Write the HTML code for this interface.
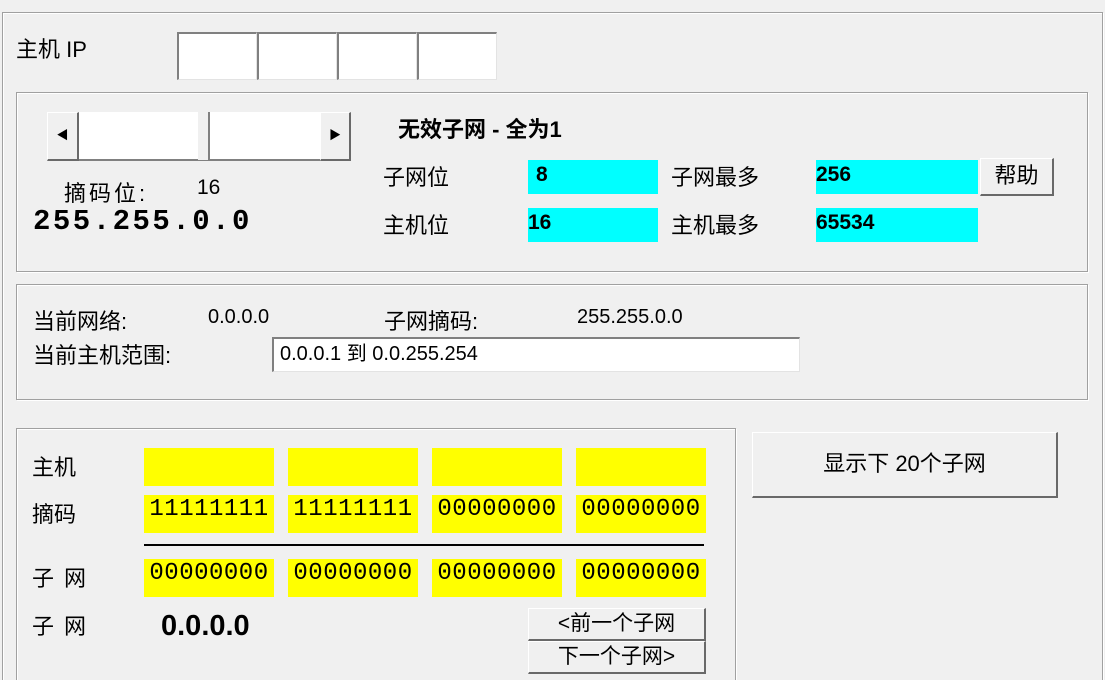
<!DOCTYPE html>
<html style="overflow:hidden;width:1105px;height:680px"><head><meta charset="utf-8"><style>
body{margin:0;width:1105px;height:680px;background:#f0f0f0;overflow:hidden;position:relative;font-family:"Liberation Sans","Noto Sans CJK SC",sans-serif;color:#000}
.a{position:absolute;white-space:nowrap}
.grp{position:absolute;border:1px solid #a0a0a0;box-shadow:inset 1px 1px 0 #fff,1px 1px 0 #fff}
.edit{position:absolute;background:#fff;border-top:2px solid #808080;border-left:2px solid #808080;border-right:1px solid #e3e3e3;border-bottom:1px solid #e3e3e3;box-sizing:border-box}
.btn{position:absolute;background:#f0f0f0;border:1px solid #fff;border-right:2px solid #696969;border-bottom:2px solid #696969;box-sizing:border-box;text-align:center}
.cy{position:absolute;background:#00ffff;font-weight:bold;font-size:21px;padding-left:8px;box-sizing:border-box;line-height:30px}
.yl{position:absolute;background:#ffff00;width:130px;height:38px;font-family:"Liberation Mono",monospace;font-size:24px;line-height:30px;text-align:center;letter-spacing:0.5px;overflow:hidden}
.lb{font-size:22px}
</style></head><body>
<div class="grp" style="left:2px;top:12px;width:1099px;height:700px"></div>
<div class="a lb" style="left:16px;top:32px">主机 IP</div>
<div class="edit" style="left:177px;top:32px;width:80px;height:48px"></div>
<div class="edit" style="left:257px;top:32px;width:80px;height:48px"></div>
<div class="edit" style="left:337px;top:32px;width:80px;height:48px"></div>
<div class="edit" style="left:417px;top:32px;width:80px;height:48px"></div>

<div class="grp" style="left:16px;top:92px;width:1070px;height:178px"></div>
<div class="a" style="left:47px;top:112px;width:304px;height:49px;background:#fff;border-bottom:2px solid #808080;box-sizing:border-box"></div>
<div class="btn" style="left:47px;top:112px;width:32px;height:49px;font-size:12px;line-height:45px">◀</div>
<div class="btn" style="left:320px;top:112px;width:31px;height:49px;font-size:12px;line-height:45px">▶</div>
<div class="a" style="left:198px;top:112px;width:10px;height:48px;background:#f0f0f0;border-right:2px solid #808080"></div>
<div class="a lb" style="left:64px;top:176px;letter-spacing:3px">摘码位:</div>
<div class="a" style="left:197px;top:176px;font-size:21px">16</div>
<div class="a" style="left:33px;top:205px;font-size:29px;font-weight:bold;letter-spacing:2.5px;font-family:'Liberation Mono',monospace">255.255.0.0</div>
<div class="a" style="left:398px;top:112px;font-size:22px;font-weight:bold">无效子网 - 全为1</div>
<div class="a lb" style="left:383px;top:160px">子网位</div>
<div class="a lb" style="left:383px;top:208px">主机位</div>
<div class="cy" style="left:528px;top:160px;width:130px;height:34px">8</div>
<div class="cy" style="left:528px;top:208px;width:130px;height:34px;padding-left:0">16</div>
<div class="a lb" style="left:671px;top:160px">子网最多</div>
<div class="a lb" style="left:671px;top:208px">主机最多</div>
<div class="cy" style="left:816px;top:160px;width:162px;height:34px;padding-left:0">256</div>
<div class="cy" style="left:816px;top:208px;width:162px;height:34px;padding-left:0">65534</div>
<div class="btn" style="left:980px;top:158px;width:74px;height:38px;font-size:22px;line-height:34px">帮助</div>

<div class="grp" style="left:16px;top:284px;width:1070px;height:114px"></div>
<div class="a lb" style="left:33px;top:304px">当前网络:</div>
<div class="a" style="left:208px;top:306px;font-size:20px">0.0.0.0</div>
<div class="a lb" style="left:384px;top:304px">子网摘码:</div>
<div class="a" style="left:577px;top:306px;font-size:20px">255.255.0.0</div>
<div class="a lb" style="left:33px;top:338px">当前主机范围:</div>
<div class="edit" style="left:272px;top:337px;width:528px;height:35px;font-size:20px;line-height:31px;padding-left:6px">0.0.0.1 到 0.0.255.254</div>

<div class="grp" style="left:16px;top:428px;width:718px;height:270px"></div>
<div class="a lb" style="left:32px;top:450px">主机</div>
<div class="a lb" style="left:32px;top:497px">摘码</div>
<div class="a lb" style="left:32px;top:561px;letter-spacing:10px">子网</div>
<div class="a lb" style="left:32px;top:609px;letter-spacing:10px">子网</div>
<div class="yl" style="left:144px;top:448px"></div>
<div class="yl" style="left:288px;top:448px"></div>
<div class="yl" style="left:432px;top:448px"></div>
<div class="yl" style="left:576px;top:448px"></div>
<div class="yl" style="left:144px;top:495px">11111111</div>
<div class="yl" style="left:288px;top:495px">11111111</div>
<div class="yl" style="left:432px;top:495px">00000000</div>
<div class="yl" style="left:576px;top:495px">00000000</div>
<div class="a" style="left:144px;top:544px;width:560px;height:2px;background:#000"></div>
<div class="yl" style="left:144px;top:559px">00000000</div>
<div class="yl" style="left:288px;top:559px">00000000</div>
<div class="yl" style="left:432px;top:559px">00000000</div>
<div class="yl" style="left:576px;top:559px">00000000</div>
<div class="a" style="left:161px;top:610px;font-size:29px;font-weight:bold">0.0.0.0</div>
<div class="btn" style="left:528px;top:608px;width:178px;height:33px;font-size:21px;line-height:30px">&lt;前一个子网</div>
<div class="btn" style="left:528px;top:641px;width:178px;height:33px;font-size:21px;line-height:30px">下一个子网&gt;</div>

<div class="btn" style="left:752px;top:432px;width:306px;height:66px;font-size:22px;line-height:62px">显示下 20个子网</div>
</body></html>
